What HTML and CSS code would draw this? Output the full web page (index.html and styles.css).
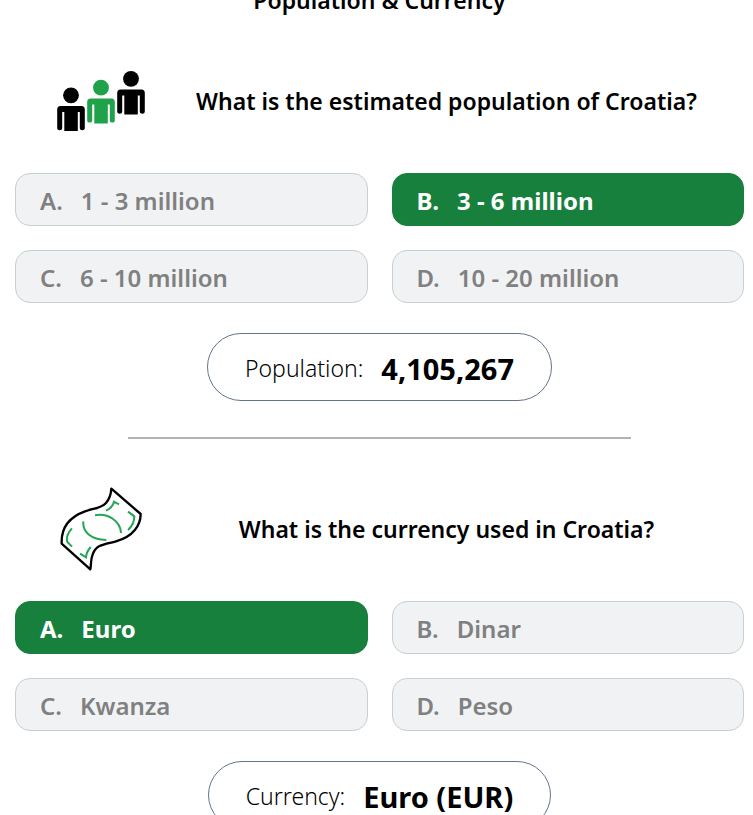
FILE: index.html
```html
<!DOCTYPE html>
<html lang="en">
<head>
  <meta charset="utf-8">
  <meta name="viewport" content="width=device-width, initial-scale=1">
  <title>Population &amp; Currency</title>
  <link rel="stylesheet" href="styles.css">
</head>
<body>
  <main class="quiz">
    <h1 class="title">Population &amp; Currency</h1>

    <section>
      <div class="question">
        <svg class="icon" viewBox="56 59 90 84" aria-hidden="true">
          <defs>
            <g id="person">
              <circle cx="71" cy="95.3" r="7.9"/>
              <path d="M60.5 106H81.5Q84.8 106 84.8 109.5V128.3Q84.8 130.2 82.3 130.2T79.8 128.3V112H77.8V131H64.3V112H62.2V128.3Q62.2 130.2 59.7 130.2T57.2 128.3V109.5Q57.2 106 60.5 106Z"/>
            </g>
          </defs>
          <use href="#person"/>
          <use href="#person" class="accent" x="30" y="-7.6"/>
          <use href="#person" x="60" y="-16.5"/>
        </svg>
        <h2 class="question-text">What is the estimated population of Croatia?</h2>
      </div>
      <div class="options">
        <button class="option" type="button"><span>A.</span><span>1 - 3 million</span></button>
        <button class="option correct" type="button"><span>B.</span><span>3 - 6 million</span></button>
        <button class="option" type="button"><span>C.</span><span>6 - 10 million</span></button>
        <button class="option" type="button"><span>D.</span><span>10 - 20 million</span></button>
      </div>
      <p class="answer"><span>Population:</span><strong>4,105,267</strong></p>
    </section>

    <hr class="divider">

    <section>
      <div class="question">
        <svg class="icon" viewBox="48 36 270 252" aria-hidden="true">
          <path class="note" d="M214 41L302 117C302 150 280 185 228 199C195 208 170 207 158 238C151 255 154 270 151 283L65 206C63 160 88 126 135 109C162 99 181 102 198 84C209 72 213 57 214 41Z"/>
          <path class="note-mark" d="M165 121C205 113 241 139 243 174M130 139C127 171 153 194 199 195M198 107Q218 97 222 80L237 88M264 110L283 124Q283 148 264 165M96 160Q76 182 82 201L96 215M120 236L138 247Q139 231 152 216"/>
        </svg>
        <h2 class="question-text">What is the currency used in Croatia?</h2>
      </div>
      <div class="options">
        <button class="option correct" type="button"><span>A.</span><span>Euro</span></button>
        <button class="option" type="button"><span>B.</span><span>Dinar</span></button>
        <button class="option" type="button"><span>C.</span><span>Kwanza</span></button>
        <button class="option" type="button"><span>D.</span><span>Peso</span></button>
      </div>
      <p class="answer"><span>Currency:</span><strong>Euro (EUR)</strong></p>
    </section>
  </main>
</body>
</html>
```

FILE: styles.css
```css
* {
  box-sizing: border-box;
}

body {
  margin: 0;
  background: #fff;
  color: #000;
  font-family: "Segoe UI", "Noto Sans", "Open Sans", sans-serif;
}

.quiz {
  margin-top: -16px;
  padding: 0 9px 30px 15px;
}

.title,
.question-text {
  margin: 0;
  font-size: 23px;
  font-weight: 600;
  line-height: 32px;
  text-align: center;
}

.question {
  display: grid;
  grid-template-columns: 93px 1fr;
  align-items: center;
  margin: 43px 0 30px;
  padding-left: 41px;
}

.icon {
  width: 90px;
  height: 84px;
}

.accent {
  fill: #1fa24a;
}

.note,
.note-mark {
  fill: none;
  stroke: #000;
  stroke-width: 7;
  stroke-linejoin: round;
}

.note-mark {
  stroke: #27a557;
  stroke-width: 6;
  stroke-linejoin: miter;
}

.options {
  display: grid;
  grid-template-columns: 1fr 1fr;
  gap: 24px;
}

.option {
  display: flex;
  align-items: center;
  gap: 18px;
  height: 53px;
  padding: 2px 24px 0;
  border: 1px solid #c5cfd4;
  border-radius: 15px;
  background: #f1f2f4;
  color: #808080;
  font: inherit;
  font-size: 24px;
  font-weight: 600;
  text-align: left;
}

.option.correct {
  border-color: #17803d;
  background: #17803d;
  color: #fff;
  font-weight: 700;
}

.answer {
  display: flex;
  align-items: center;
  gap: 18px;
  width: fit-content;
  height: 68px;
  margin: 30px auto 36px;
  padding: 2px 37px 0;
  border: 1px solid #64748b;
  border-radius: 34px;
  font-size: 23px;
  font-weight: 300;
}

.answer strong {
  font-size: 29px;
  font-weight: 700;
}

.divider {
  width: 69%;
  height: 2px;
  margin: 0 auto 48px;
  border: 0;
  background: #b3b3b3;
}

.divider + section .question {
  margin-top: 0;
}
```
